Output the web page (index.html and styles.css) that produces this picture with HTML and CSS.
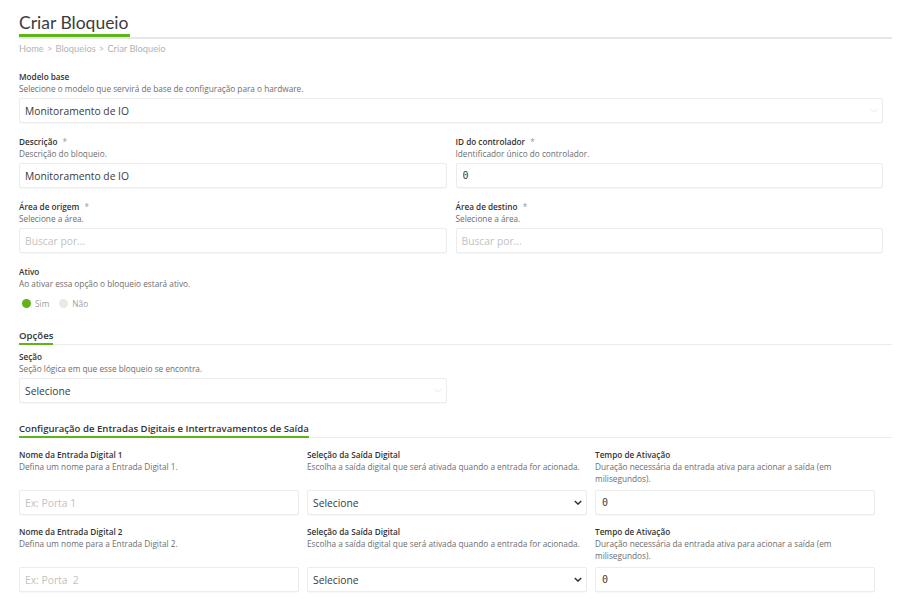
FILE: index.html
```html
<!DOCTYPE html>
<html lang="pt-BR">
<head>
    <meta charset="UTF-8">
    <title>Criar Bloqueio</title>
    <link rel="stylesheet" href="styles.css">
</head>
<body>
<div class="page">
    <div class="page-header">
        <h1>Criar Bloqueio</h1>
    </div>
    <div class="breadcrumb">Home <span class="sep">&gt;</span> Bloqueios <span class="sep">&gt;</span> Criar Bloqueio</div>

    <form class="form-bloqueio">
        <div class="field">
            <label>Modelo base</label>
            <div class="help">Selecione o modelo que servirá de base de configuração para o hardware.</div>
            <div class="select-wrap">
                <select class="input"><option>Monitoramento de IO</option></select>
                <svg class="chevron light" viewBox="0 0 10 6" width="8" height="5"><path d="M1 1l4 4 4-4" fill="none" stroke="currentColor" stroke-width="1.6"/></svg>
            </div>
        </div>

        <div class="row-2">
            <div class="field">
                <label>Descrição <span class="req">*</span></label>
                <div class="help">Descrição do bloqueio.</div>
                <input class="input" type="text" value="Monitoramento de IO">
            </div>
            <div class="field">
                <label>ID do controlador <span class="req">*</span></label>
                <div class="help">Identificador único do controlador.</div>
                <input class="input mono" type="number" value="0">
            </div>
        </div>

        <div class="row-2">
            <div class="field">
                <label>Área de origem <span class="req">*</span></label>
                <div class="help">Selecione a área.</div>
                <input class="input" type="text" placeholder="Buscar por...">
            </div>
            <div class="field">
                <label>Área de destino <span class="req">*</span></label>
                <div class="help">Selecione a área.</div>
                <input class="input" type="text" placeholder="Buscar por...">
            </div>
        </div>

        <div class="field">
            <label>Ativo</label>
            <div class="help">Ao ativar essa opção o bloqueio estará ativo.</div>
            <div class="radios">
                <span class="radio on"></span><span class="radio-label">Sim</span>
                <span class="radio"></span><span class="radio-label">Não</span>
            </div>
        </div>

        <h2 class="section"><span>Opções</span></h2>

        <div class="row-2">
            <div class="field">
                <label>Seção</label>
                <div class="help">Seção lógica em que esse bloqueio se encontra.</div>
                <div class="select-wrap">
                    <select class="input"><option>Selecione</option></select>
                    <svg class="chevron light" viewBox="0 0 10 6" width="8" height="5"><path d="M1 1l4 4 4-4" fill="none" stroke="currentColor" stroke-width="1.6"/></svg>
                </div>
            </div>
        </div>

        <h2 class="section section-io"><span>Configuração de Entradas Digitais e Intertravamentos de Saída</span></h2>

        <div class="row-3">
            <div class="field">
                <label>Nome da Entrada Digital 1</label>
                <div class="help">Defina um nome para a Entrada Digital 1.</div>
                <input class="input" type="text" placeholder="Ex: Porta 1">
            </div>
            <div class="field">
                <label>Seleção da Saída Digital</label>
                <div class="help">Escolha a saída digital que será ativada quando a entrada for acionada.</div>
                <div class="select-wrap">
                    <select class="input"><option>Selecione</option></select>
                    <svg class="chevron" viewBox="0 0 10 6" width="8" height="5"><path d="M1 1l4 4 4-4" fill="none" stroke="currentColor" stroke-width="1.8"/></svg>
                </div>
            </div>
            <div class="field">
                <label>Tempo de Ativação</label>
                <div class="help">Duração necessária da entrada ativa para acionar a saída (em milisegundos).</div>
                <input class="input mono" type="number" value="0">
            </div>
        </div>

        <div class="row-3">
            <div class="field">
                <label>Nome da Entrada Digital 2</label>
                <div class="help">Defina um nome para a Entrada Digital 2.</div>
                <input class="input" type="text" placeholder="Ex: Porta  2">
            </div>
            <div class="field">
                <label>Seleção da Saída Digital</label>
                <div class="help">Escolha a saída digital que será ativada quando a entrada for acionada.</div>
                <div class="select-wrap">
                    <select class="input"><option>Selecione</option></select>
                    <svg class="chevron" viewBox="0 0 10 6" width="8" height="5"><path d="M1 1l4 4 4-4" fill="none" stroke="currentColor" stroke-width="1.8"/></svg>
                </div>
            </div>
            <div class="field">
                <label>Tempo de Ativação</label>
                <div class="help">Duração necessária da entrada ativa para acionar a saída (em milisegundos).</div>
                <input class="input mono" type="number" value="0">
            </div>
        </div>
    </form>
</div>
</body>
</html>
```

FILE: styles.css
```css
/* Layout geral */
* {
    box-sizing: border-box;
}

body {
    margin: 0;
    background: #ffffff;
    font-family: "Open Sans", Arial, sans-serif;
    color: #333333;
}

.page {
    padding: 12px 24px 0 19px;
}

/* Cabeçalho com título sublinhado */
.page-header {
    border-bottom: 2px solid #e6e6e6;
    height: 27px;
}

.page-header h1 {
    display: inline-block;
    margin: 0;
    font-family: Lato, "Open Sans", sans-serif;
    font-weight: 400;
    font-size: 17.5px;
    line-height: 22px;
    color: #3c3c3c;
    padding-right: 1px;
    border-bottom: 3px solid #5fb418;
}

.breadcrumb {
    margin-top: 4px;
    font-family: Lato, sans-serif;
    font-size: 9.3px;
    line-height: 12px;
    color: #b3b3b3;
}

.breadcrumb .sep {
    font-size: 8.5px;
    margin: 0 1px;
}

/* Campos do formulário */
.form-bloqueio {
    padding-right: 9px;
    margin-top: 16px;
}

.field {
    display: flex;
    flex-direction: column;
    margin-bottom: 13px;
}

.field label {
    font-size: 8.2px;
    font-weight: 600;
    line-height: 12px;
    color: #333333;
}

.req {
    color: #999999;
    font-weight: 400;
    margin-left: 3px;
}

.help {
    font-size: 8.25px;
    line-height: 12px;
    color: #6e6e6e;
}

.input {
    display: block;
    width: 100%;
    height: 25px;
    margin-top: 3px;
    padding: 0 5px;
    border: 1px solid #ececec;
    border-radius: 2px;
    background: #ffffff;
    box-shadow: 0 1px 1px rgba(0, 0, 0, 0.03);
    font-family: "Open Sans", Arial, sans-serif;
    font-size: 10.3px;
    color: #3a3a3a;
    outline: none;
}

.input::placeholder {
    color: #c2c2c2;
}

.mono {
    font-family: "DejaVu Sans Mono", monospace;
    font-size: 10px;
    padding-left: 6px;
}

.mono::-webkit-inner-spin-button {
    -webkit-appearance: none;
}

select.input {
    appearance: none;
    -webkit-appearance: none;
}

.select-wrap {
    position: relative;
    margin-top: 3px;
}

.select-wrap .input {
    margin-top: 0;
}

.chevron {
    position: absolute;
    right: 5px;
    top: 10px;
    color: #333333;
}

.chevron.light {
    color: #f0f0f0;
}

/* Grades de colunas */
.row-2 {
    display: grid;
    grid-template-columns: 1fr 1fr;
    column-gap: 9px;
}

.row-3 {
    display: grid;
    grid-template-columns: 280px 280px 280px;
    column-gap: 8px;
}

.row-3 .field {
    margin-bottom: 11px;
}

.row-3 .input,
.row-3 .select-wrap {
    margin-top: auto;
}

.row-3 .help {
    margin-bottom: 5px;
}

/* Rádio Ativo */
.radios {
    display: flex;
    align-items: center;
    margin-top: 7px;
    height: 12px;
    padding-left: 3px;
}

.radio {
    width: 9px;
    height: 9px;
    border-radius: 50%;
    background: #e9e9e9;
}

.radio.on {
    background: #5fb418;
}

.radio-label {
    font-size: 8.3px;
    color: #a0a0a0;
    margin: 0 10px 0 4px;
}

/* Títulos de seção */
.section {
    margin: 20px -9px 6px 0;
    border-bottom: 1px solid #ebebeb;
    font-size: 9.6px;
    font-weight: 600;
    line-height: 14px;
    color: #333333;
}

.section span {
    display: inline-block;
    border-bottom: 2px solid #5fb418;
    margin-bottom: -1px;
}

.section-io {
    margin-top: 6px;
    margin-bottom: 11px;
}
```
